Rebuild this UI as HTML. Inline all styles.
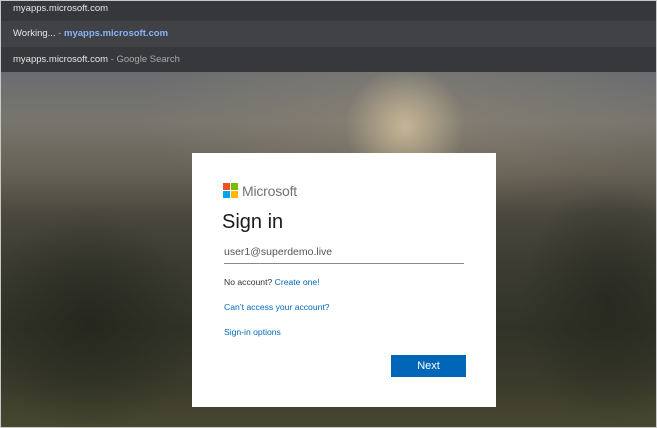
<!DOCTYPE html>
<html><head><style>
*{margin:0;padding:0;box-sizing:border-box}
body{width:657px;height:428px;overflow:hidden;font-family:"Liberation Sans",sans-serif;position:relative;background:#3a3a32}
.bg{position:absolute;left:0;top:72px;width:657px;height:356px;
background:
radial-gradient(ellipse 60px 60px at 405px 55px,rgba(225,205,165,.7),rgba(200,180,140,0) 100%),
radial-gradient(ellipse 260px 100px at 400px 40px,rgba(150,140,120,.45),rgba(120,110,95,0) 100%),
radial-gradient(ellipse 110px 110px at 90px 250px,rgba(35,37,28,.8),rgba(40,42,30,0) 100%),
radial-gradient(ellipse 90px 120px at 610px 230px,rgba(35,37,28,.7),rgba(40,42,30,0) 100%),
linear-gradient(180deg,#6a6d70 0%,#78756e 14%,#676256 28%,#4a483e 40%,#3b3b31 55%,#313328 72%,#3a3b2b 88%,#484830 100%);}
.bar{position:absolute;left:0;width:657px;color:#e6e6e6;font-size:9.5px;padding-left:13px}
.r1{top:0;height:21px;line-height:18px;background:#35373a}
.r2{top:21px;height:26px;line-height:25px;background:#404245}
.r3{top:47px;height:25px;line-height:26px;background:#36383b}
.grey{color:#aaa}
.blue{color:#8ab4f8;font-weight:bold}
.card{position:absolute;left:192px;top:153px;width:304px;height:254px;background:#fff}
.logo{position:absolute;left:31px;top:30px;width:15px;height:15px}
.logo i{position:absolute;width:7px;height:7px}
.ms{position:absolute;left:50px;top:30px;font-size:14px;color:#737373;letter-spacing:-.2px}
.h{position:absolute;left:30px;top:58px;font-size:20px;color:#1b1b1b}
.in{position:absolute;left:32px;top:93px;font-size:10.5px;color:#555}
.ul{position:absolute;left:32px;top:110px;width:240px;height:1px;background:#8a8a8a}
.t{position:absolute;left:32px;font-size:8.6px;color:#333}
.a{color:#0067b8}
.btn{position:absolute;left:199px;top:202px;width:75px;height:22px;background:#0067b8;color:#fff;font-size:11px;text-align:center;line-height:22px}
.frame{position:absolute;inset:0;border:1px solid #c8c8c8;pointer-events:none}
</style></head><body>
<div class="bg"></div>
<div class="bar r1">myapps.microsoft.com</div>
<div class="bar r2">Working... <span class="grey">-</span> <span class="blue">myapps.microsoft.com</span></div>
<div class="bar r3">myapps.microsoft.com <span class="grey">- Google Search</span></div>
<div class="card">
<div class="logo"><i style="left:0;top:0;background:#f25022"></i><i style="left:8px;top:0;background:#7fba00"></i><i style="left:0;top:8px;background:#00a4ef"></i><i style="left:8px;top:8px;background:#ffb900"></i></div>
<div class="ms">Microsoft</div>
<div class="h">Sign in</div>
<div class="in">user1@superdemo.live</div>
<div class="ul"></div>
<div class="t" style="top:124px">No account? <span class="a">Create one!</span></div>
<div class="t a" style="top:149px">Can’t access your account?</div>
<div class="t a" style="top:174px">Sign-in options</div>
<div class="btn">Next</div>
</div>
<div class="frame"></div>
</body></html>
